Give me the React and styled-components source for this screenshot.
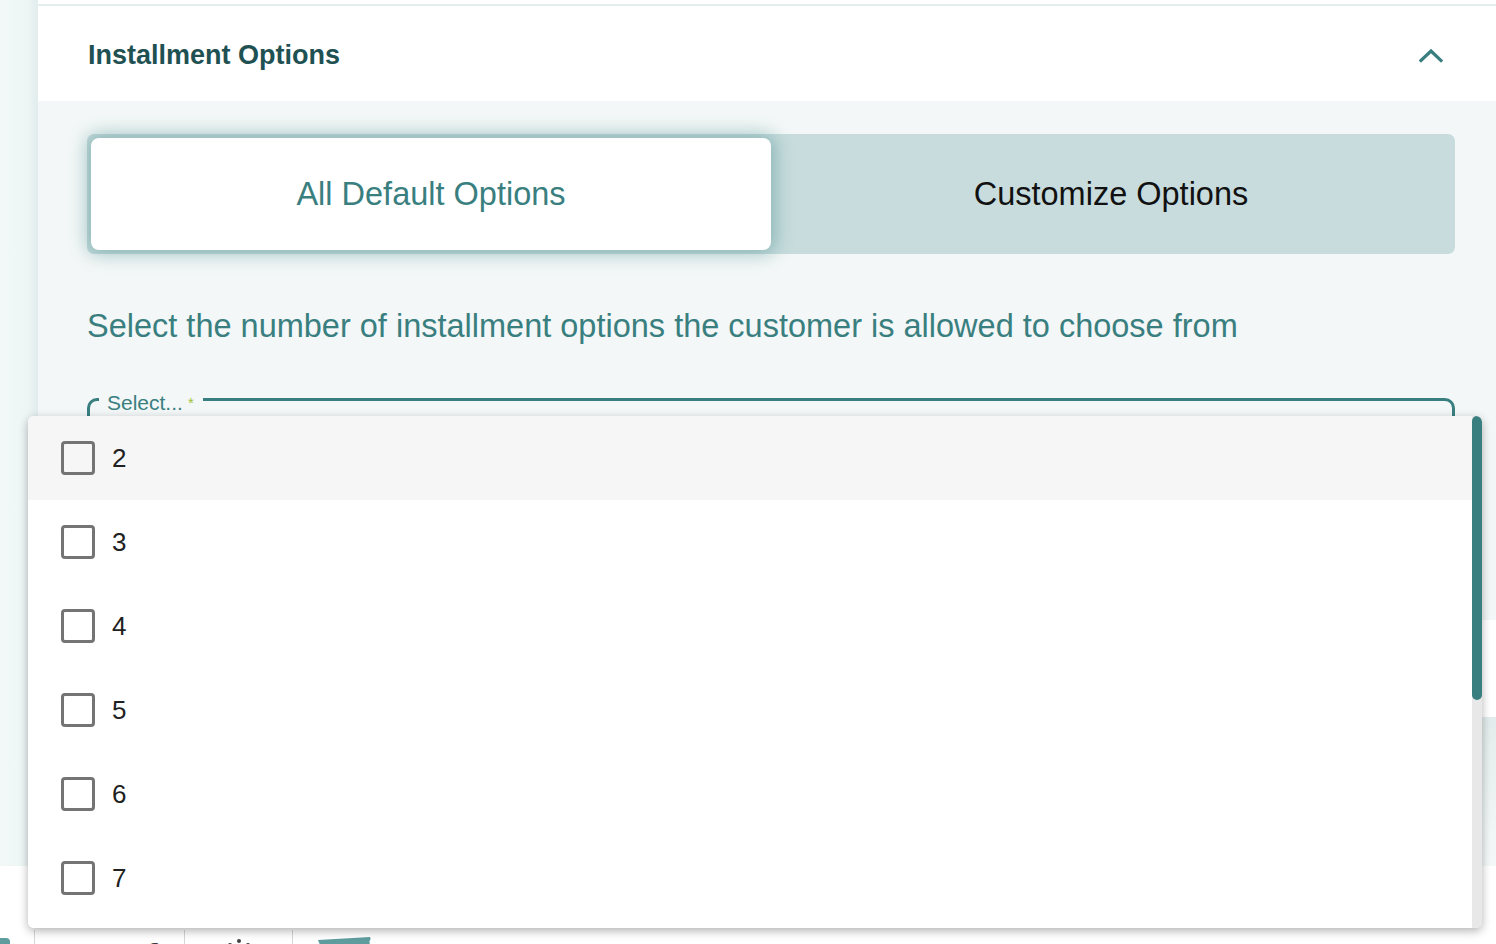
import { useState } from "react";
import styled, { createGlobalStyle } from "styled-components";

const TEAL = "#3a7f80";

const GlobalStyle = createGlobalStyle`
  html, body {
    margin: 0;
    padding: 0;
    background: #ffffff;
    overflow: hidden;
  }
  body {
    font-family: "Liberation Sans", Arial, Helvetica, sans-serif;
  }
  * {
    box-sizing: border-box;
  }
`;

const Page = styled.div`
  position: relative;
  width: 1496px;
  height: 944px;
  overflow: hidden;
  display: flex;
  flex-direction: column;
`;

const TopArea = styled.div`
  display: flex;
  height: 866px;
  flex: none;
`;

const SideStrip = styled.div`
  width: 38px;
  flex: none;
  background: linear-gradient(to right, #f2f8f8 0%, #eef5f5 70%, #e1ecec 100%);
`;

const Main = styled.div`
  flex: 1;
  display: flex;
  flex-direction: column;
  background: #ffffff;
`;

const TopRule = styled.div`
  margin-top: 4px;
  height: 2px;
  background: #e3efef;
`;

const Header = styled.div`
  height: 95px;
  display: flex;
  align-items: center;
  justify-content: space-between;
  padding: 3px 53px 0 50px;
`;

const Title = styled.h2`
  margin: 0;
  font-size: 27px;
  font-weight: 700;
  color: #1f5153;
`;

const Body = styled.div`
  height: 519px;
  background: #f3f7f7;
  padding: 33px 41px 0 49px;
`;

const Toggle = styled.div`
  display: grid;
  grid-template-columns: 1fr 1fr;
  height: 120px;
  padding: 4px;
  border-radius: 7px;
  background: #c8dcdd;
`;

const ToggleTab = styled.button`
  border: none;
  border-radius: 8px;
  font-family: inherit;
  font-size: 32.5px;
  cursor: pointer;
  display: flex;
  align-items: center;
  justify-content: center;
  background: ${(p) => (p.$active ? "#ffffff" : "transparent")};
  color: ${(p) => (p.$active ? TEAL : "#111111")};
  box-shadow: ${(p) =>
    p.$active ? "0 0 18px 4px rgba(62, 132, 134, 0.45)" : "none"};
  position: relative;
  z-index: ${(p) => (p.$active ? 1 : 0)};
`;

const Description = styled.p`
  margin: 54px 0 0;
  font-size: 32.5px;
  line-height: 36px;
  color: ${TEAL};
`;

const Field = styled.fieldset`
  margin: 39px 0 0;
  height: 62px;
  padding: 0 16px 0 9px;
  border: 3px solid ${TEAL};
  border-radius: 10px;
`;

const FieldLegend = styled.legend`
  padding: 8px 9px 0 8px;
  font-size: 21px;
  line-height: 24px;
  color: ${TEAL};
`;

const Required = styled.span`
  color: #9dc33b;
  font-size: 15px;
  vertical-align: top;
  margin-left: 5px;
`;

const SummaryCard = styled.div`
  height: 97px;
  background: #ffffff;
  border-bottom-right-radius: 14px;
`;

const Band = styled.div`
  height: 149px;
  background: linear-gradient(to bottom, #e3ecec 0%, #eef4f4 60%, #f4f8f8 100%);
`;

const Footer = styled.div`
  height: 78px;
  flex: none;
  background: #ffffff;
  display: flex;
  padding-top: 64px;
  overflow: hidden;
`;

const ToolItem = styled.div`
  width: ${(p) => p.$width}px;
  height: 40px;
  flex: none;
  display: flex;
  align-items: flex-start;
  padding-left: ${(p) => p.$pad}px;
  padding-top: 6px;
  border-left: ${(p) => (p.$divider ? "1px solid #d6d6d6" : "none")};
  overflow: hidden;
`;

const BackText = styled.span`
  font-size: 34px;
  font-weight: 700;
  color: #3a3a3a;
  white-space: nowrap;
  line-height: 1;
  margin-top: 2px;
`;

const Dropdown = styled.div`
  position: absolute;
  top: 416px;
  left: 28px;
  width: 1454px;
  height: 512px;
  display: flex;
  background: #ffffff;
  border-radius: 6px;
  box-shadow: 0 3px 10px rgba(0, 0, 0, 0.3);
  overflow: hidden;
  z-index: 5;
`;

const OptionList = styled.ul`
  flex: 1;
  list-style: none;
  margin: 0;
  padding: 0;
  height: 100%;
  overflow: hidden;
`;

const ScrollTrack = styled.div`
  width: 10px;
  flex: none;
  background: #e8e8e8;
`;

const ScrollThumb = styled.div`
  height: 284px;
  border-radius: 5px;
  background: ${TEAL};
`;

const OptionRow = styled.li`
  height: 84px;
  display: flex;
  align-items: center;
  gap: 17px;
  padding-left: 33px;
  background: ${(p) => (p.$hover ? "#f6f6f6" : "#ffffff")};
  font-size: 26px;
  color: #212121;
  cursor: pointer;
`;

const CheckBox = styled.span`
  width: 34px;
  height: 34px;
  flex: none;
  border: 3px solid #747474;
  border-radius: 4px;
  background: ${(p) => (p.$checked ? TEAL : "transparent")};
`;

function ChevronUp() {
  return (
    <svg width="24" height="15" viewBox="0 0 24 15" fill="none">
      <polyline
        points="2,12.5 12,3 22,12.5"
        stroke={TEAL}
        strokeWidth="3.2"
        strokeLinecap="square"
      />
    </svg>
  );
}

const options = [2, 3, 4, 5, 6, 7, 8, 9, 10, 11, 12];

export default function App() {
  const [mode, setMode] = useState("default");
  const [checked, setChecked] = useState([]);

  const toggleOption = (value) => {
    setChecked((prev) =>
      prev.includes(value) ? prev.filter((v) => v !== value) : [...prev, value]
    );
  };

  return (
    <>
      <GlobalStyle />
      <Page>
        <TopArea>
          <SideStrip />
          <Main>
            <TopRule />
            <Header>
              <Title>Installment Options</Title>
              <ChevronUp />
            </Header>
            <Body>
              <Toggle>
                <ToggleTab
                  $active={mode === "default"}
                  onClick={() => setMode("default")}
                >
                  All Default Options
                </ToggleTab>
                <ToggleTab
                  $active={mode === "custom"}
                  onClick={() => setMode("custom")}
                >
                  Customize Options
                </ToggleTab>
              </Toggle>
              <Description>
                Select the number of installment options the customer is
                allowed to choose from
              </Description>
              <Field>
                <FieldLegend>
                  Select...<Required>*</Required>
                </FieldLegend>
              </Field>
            </Body>
            <SummaryCard />
            <Band />
          </Main>
        </TopArea>
        <Footer>
          <ToolItem $width={34} $pad={0}>
            <svg width="12" height="14" viewBox="0 0 12 14">
              <rect x="-4" y="2" width="14" height="14" rx="4" fill="#5e9c9d" />
            </svg>
          </ToolItem>
          <ToolItem $width={150} $pad={34} $divider>
            <BackText>‹ Draft</BackText>
          </ToolItem>
          <ToolItem $width={108} $pad={40} $divider>
            <svg width="30" height="12" viewBox="0 0 30 12">
              <circle cx="5" cy="9" r="2" fill="#444" />
              <circle cx="14" cy="5" r="2" fill="#444" />
              <circle cx="23" cy="9" r="2" fill="#444" />
            </svg>
          </ToolItem>
          <ToolItem $width={120} $pad={25} $divider>
            <svg width="64" height="14" viewBox="0 0 64 14">
              <path d="M0 4 L52 1 L56 14 L4 14 Z" fill="#5e9c9d" />
              <circle cx="55" cy="6" r="3.5" fill="#ffffff" />
            </svg>
          </ToolItem>
        </Footer>
        <Dropdown>
          <OptionList>
            {options.map((value, index) => (
              <OptionRow
                key={value}
                $hover={index === 0}
                onClick={() => toggleOption(value)}
              >
                <CheckBox $checked={checked.includes(value)} />
                {value}
              </OptionRow>
            ))}
          </OptionList>
          <ScrollTrack>
            <ScrollThumb />
          </ScrollTrack>
        </Dropdown>
      </Page>
    </>
  );
}
